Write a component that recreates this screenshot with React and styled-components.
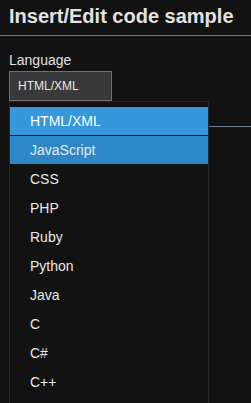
import React from 'react';
import styled, { createGlobalStyle } from 'styled-components';

const GlobalStyle = createGlobalStyle`
  html, body {
    margin: 0;
    background: #121212;
  }
  body {
    font-family: "Liberation Sans", Arial, sans-serif;
    color: #e6e6e6;
    overflow: hidden;
  }
`

const Dialog = styled.div`
  width: 251px;
  height: 403px;
  background: #121212;
  overflow: hidden;
`

const Header = styled.div`
  padding: 4px 9px 7px;
  border-bottom: 1px solid #7a7a7a;
`

const Title = styled.h1`
  margin: 0;
  font-size: 20px;
  line-height: 24px;
  font-weight: bold;
  color: #e2e2e2;
  white-space: nowrap;
`

const Body = styled.div`
  position: relative;
  padding: 16px 9px 0;
`

const Label = styled.div`
  font-size: 14px;
  line-height: 16px;
  color: #e0e0e0;
`

const Field = styled.div`
  position: relative;
  margin-top: 3px;
`

const Select = styled.div`
  box-sizing: border-box;
  width: 103px;
  height: 30px;
  display: flex;
  align-items: center;
  padding-left: 8px;
  background: #393939;
  border: 1px solid #6e6e6e;
  font-size: 12px;
  color: #e6e6e6;
`

// underline of the tab strip that sits behind the open menu
const TabLine = styled.div`
  margin: 25px -9px 0 0;
  border-bottom: 1px solid #6c7a89;
`

const Menu = styled.ul`
  position: absolute;
  top: 30px;
  left: 0;
  box-sizing: border-box;
  width: 200px;
  height: 320px;
  margin: 0;
  padding: 5px 0 0;
  list-style: none;
  background: #121212;
  border: 1px solid #262626;
`

const Item = styled.li`
  height: 28px;
  margin-bottom: 1px;
  padding-left: 20px;
  display: flex;
  align-items: center;
  font-size: 14px;
  color: ${props => props.$active ? '#ffffff' : '#e8e8e8'};
  background: ${props => props.$active ? '#3498db' : props.$hover ? '#2d87c6' : 'transparent'};
`

const languages = ['HTML/XML', 'JavaScript', 'CSS', 'PHP', 'Ruby', 'Python', 'Java', 'C', 'C#', 'C++'];

const App = () => {
    return (
        <>
            <GlobalStyle />
            <Dialog>
                <Header>
                    <Title>Insert/Edit code sample</Title>
                </Header>
                <Body>
                    <Label>Language</Label>
                    <Field>
                        <Select>HTML/XML</Select>
                        <Menu>
                            {languages.map((lang, i) => (
                                <Item key={lang} $active={i === 0} $hover={i === 1}>{lang}</Item>
                            ))}
                        </Menu>
                    </Field>
                    <TabLine />
                </Body>
            </Dialog>
        </>
    );
}

export default App;
